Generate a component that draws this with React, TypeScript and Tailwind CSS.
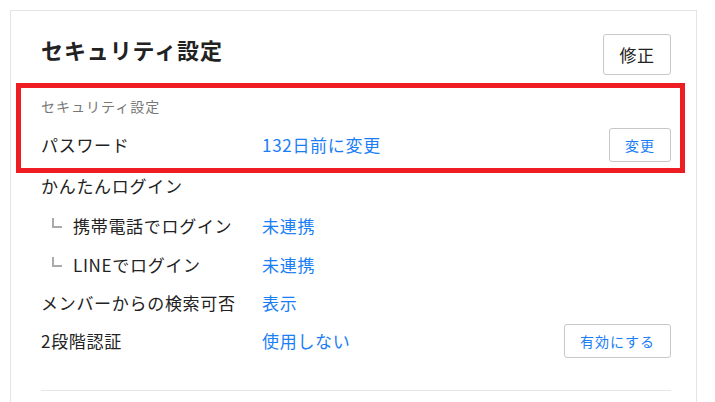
import React from "react";

const font = { fontFamily: '"Noto Sans CJK JP", "Noto Sans", sans-serif' };

function SubMark() {
  return <span className="ml-[11px] mr-[11px] mb-[6px] inline-block h-[10px] w-[10px] border-b-2 border-l-2 border-[#aaaaaa]" />;
}

function Row({
  label,
  value,
  sub,
  button,
  className,
}: {
  label: string;
  value: string;
  sub?: boolean;
  button?: string;
  className: string;
}) {
  return (
    <div className={`flex items-center ${className}`}>
      <div className="flex w-[221px] shrink-0 items-center text-[17px] tracking-[0.7px] text-[#222]">
        {sub && <SubMark />}
        <span>{label}</span>
      </div>
      <div className="flex-1 text-[17px] tracking-[0.7px] text-[#1a7ef5]">{value}</div>
      {button && (
        <button className="h-[34px] w-[107px] rounded-[3px] border border-[#c8c8c8] bg-white text-[14px] tracking-[1px] text-[#1a7ef5]">
          {button}
        </button>
      )}
    </div>
  );
}

export default function App() {
  return (
    <div className="h-[402px] w-[715px] overflow-hidden bg-white pl-[10px] pt-[10px]" style={font}>
      <div className="w-[687px] h-[420px] border border-[#e4e4e4] pl-[30px] pr-[25px] pt-[23px]">
        <div className="flex items-start justify-between">
          <h1 className="mt-[1px] text-[22px] font-bold leading-[28px] tracking-[0.9px] text-[#222]">セキュリティ設定</h1>
          <button className="h-[41px] w-[68px] rounded-[3px] border border-[#c8c8c8] bg-white text-[17px] tracking-[0.5px] text-[#222]">
            修正
          </button>
        </div>

        <div className="ml-[-25px] mr-[-14px] mt-[8px] border-[5px] border-[#ee1d23] pl-[20px] pr-[9px] pt-[8px] pb-[6px]">
          <div className="text-[14px] leading-[20px] tracking-[1px] text-[#777]">セキュリティ設定</div>
          <div className="mt-[12px] flex h-[34px] items-center">
            <div className="w-[221px] shrink-0 text-[17px] tracking-[0.7px] text-[#222]">パスワード</div>
            <div className="flex-1 text-[17px] tracking-[0.7px] text-[#1a7ef5]">132日前に変更</div>
            <button className="h-[34px] w-[62px] rounded-[3px] border border-[#c8c8c8] bg-white text-[14px] tracking-[1px] text-[#1a7ef5]">
              変更
            </button>
          </div>
        </div>

        <div className="flex h-[33px] items-center pb-[7px] text-[17px] tracking-[0.7px] text-[#222]">かんたんログイン</div>
        <Row className="h-[39px]" sub label="携帯電話でログイン" value="未連携" />
        <Row className="h-[39px]" sub label="LINEでログイン" value="未連携" />
        <Row className="h-[38px]" label="メンバーからの検索可否" value="表示" />
        <Row className="h-[38px]" label="2段階認証" value="使用しない" button="有効にする" />

        <div className="mt-[30px] border-t border-[#e6e6e6]" />
      </div>
    </div>
  );
}
